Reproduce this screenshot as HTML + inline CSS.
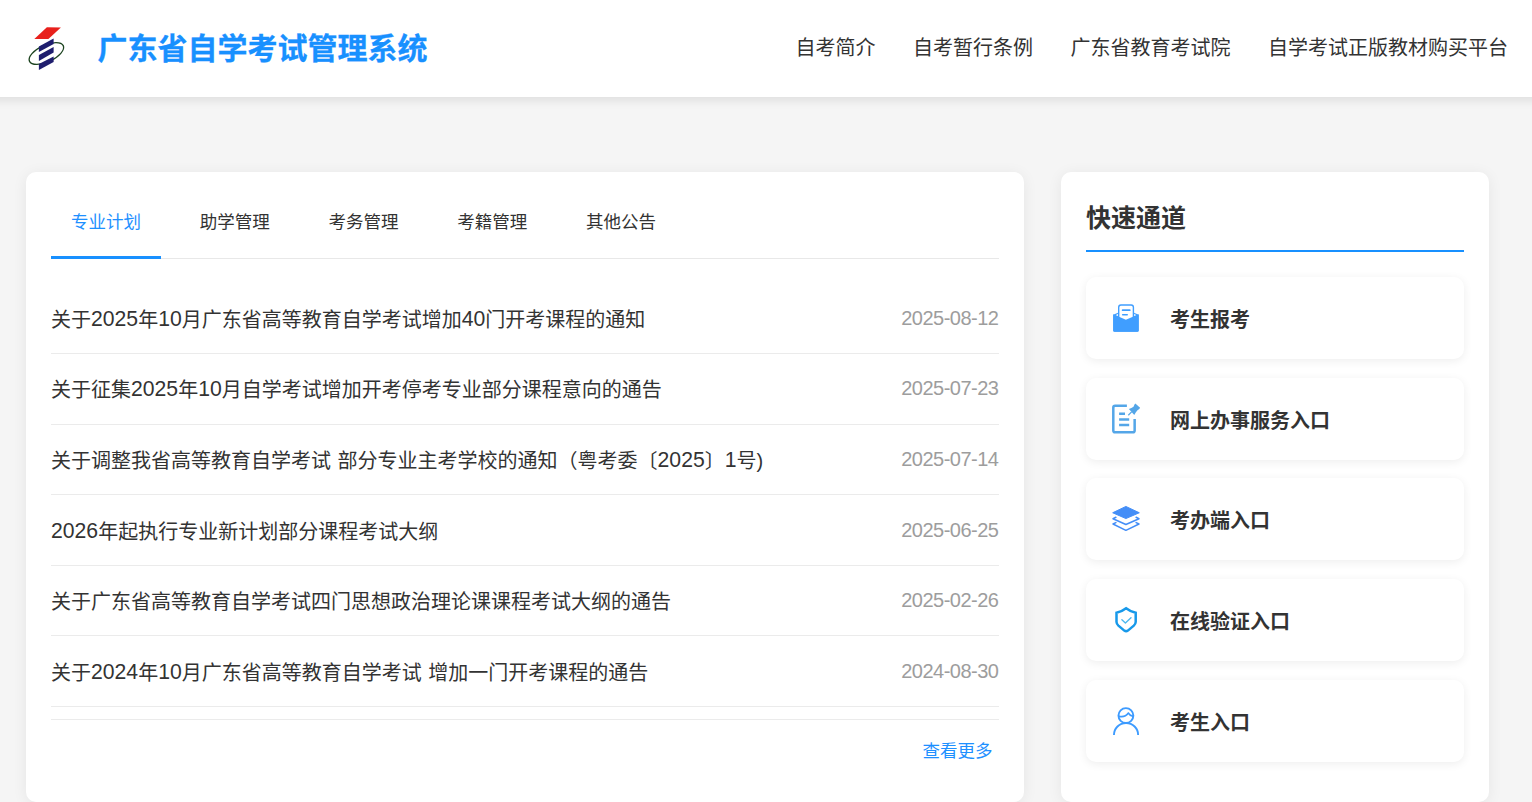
<!DOCTYPE html>
<html lang="zh-CN">
<head>
<meta charset="utf-8">
<title>广东省自学考试管理系统</title>
<style>
*{box-sizing:border-box;margin:0;padding:0}
html,body{width:1532px;height:802px;overflow:hidden}
body{background:#f5f5f5;font-family:"Liberation Sans","Noto Sans CJK SC",sans-serif;color:#333;position:relative}
a{text-decoration:none;color:inherit}
ul{list-style:none}

/* header */
.header{position:absolute;left:-30px;top:0;width:1592px;height:97px;background:#fff;box-shadow:0 2.5px 10px rgba(0,0,0,.1)}
.header-in{position:absolute;left:30px;top:0;width:1532px;height:97px}
.logo{position:absolute;left:26px;top:24px;width:42px;height:50px}
.site-title{position:absolute;left:97.5px;top:1.3px;-webkit-text-stroke:.3px #1890ff;height:97px;line-height:96px;font-size:30px;font-weight:700;color:#1890ff;white-space:nowrap}
.nav{position:absolute;right:24px;top:0;height:97px;display:flex;align-items:center}
.nav a{font-size:20px;color:#333;margin-left:37.5px;line-height:97px;white-space:nowrap}

/* left card */
.card{position:absolute;background:#fff;border-radius:10px;box-shadow:0 2px 15px rgba(0,0,0,.065)}
.news{left:26px;top:172px;width:998px;height:630px;padding:0 25px}
.tabs{position:relative;height:87px;border-bottom:1px solid #e8e8e8;display:flex;padding-top:25px}
.tab{width:110px;height:61px;margin-right:18.75px;text-align:center;font-size:17.5px;line-height:50.6px;color:#333;position:relative}
.tab.active{color:#1e90ff}
.tab.active:after{content:"";position:absolute;left:0;right:0;bottom:-.6px;height:2.6px;background:#1890ff}
.list{margin-top:24.5px}
.list li{height:70.6px;border-bottom:1px solid #ebebeb;display:flex;justify-content:space-between;align-items:center;white-space:nowrap}
.list li .t{font-size:20px;color:#333;word-spacing:1px}
.list li .d{font-size:20px;color:#9d9d9d;letter-spacing:-.5px;position:relative;top:0;left:-.5px}
.n{font-size:21.2px;line-height:0;position:relative;top:-1px}
.more{margin-top:12px;border-top:1px solid #ebebeb;text-align:right;padding:17px 6.5px 0 0;font-size:17.5px;color:#1e90ff}

/* right card */
.quick{left:1061px;top:172px;width:428px;height:630px;padding:25px}
.quick h3{font-size:25px;font-weight:700;color:#333;line-height:42.2px;height:55px;border-bottom:2.5px solid #1890ff;margin-top:0}
.q-item{position:absolute;left:25px;width:378px;height:82px;border-radius:10px;background:#fff;box-shadow:0 2px 10px rgba(0,0,0,.07);display:flex;align-items:center}
.q-item svg{position:absolute;left:0;top:0;width:80px;height:82px}
.q-item span{position:absolute;left:84px;top:0;line-height:87px;font-size:20px;font-weight:700;color:#333;white-space:nowrap}
</style>
</head>
<body>

<div class="header"><div class="header-in">
  <svg class="logo" viewBox="26 24 42 50">
    <polygon points="46.9,27.2 60.9,27.5 48.4,38.9 34.3,39.1" fill="#e8201c"/>
    <ellipse cx="46.4" cy="53.5" rx="18.6" ry="8.4" transform="rotate(-25 46.4 53.5)" fill="none" stroke="#1d4420" stroke-width="1.3"/>
    <polygon points="38.9,46.4 53.6,38.4 53.6,43.9 38.9,51.9" fill="#1f1e6e"/>
    <polygon points="38.9,54.9 53.6,47.1 53.6,52.4 38.9,60.9" fill="#1f1e6e"/>
    <polygon points="38.9,63.9 53.6,56.4 53.6,61.9 38.9,69.9" fill="#1f1e6e"/>
  </svg>
  <div class="site-title">广东省自学考试管理系统</div>
  <div class="nav">
    <a>自考简介</a>
    <a>自考暂行条例</a>
    <a>广东省教育考试院</a>
    <a>自学考试正版教材购买平台</a>
  </div>
</div></div>

<div class="card news">
  <div class="tabs">
    <div class="tab active">专业计划</div>
    <div class="tab">助学管理</div>
    <div class="tab">考务管理</div>
    <div class="tab">考籍管理</div>
    <div class="tab">其他公告</div>
  </div>
  <ul class="list">
    <li><span class="t">关于<span class="n">2025</span>年<span class="n">10</span>月广东省高等教育自学考试增加<span class="n">40</span>门开考课程的通知</span><span class="d">2025-08-12</span></li>
    <li><span class="t">关于征集<span class="n">2025</span>年<span class="n">10</span>月自学考试增加开考停考专业部分课程意向的通告</span><span class="d">2025-07-23</span></li>
    <li><span class="t">关于调整我省高等教育自学考试 部分专业主考学校的通知（粤考委〔<span class="n">2025</span>〕<span class="n">1</span>号)</span><span class="d">2025-07-14</span></li>
    <li><span class="t"><span class="n">2026</span>年起执行专业新计划部分课程考试大纲</span><span class="d">2025-06-25</span></li>
    <li><span class="t">关于广东省高等教育自学考试四门思想政治理论课课程考试大纲的通告</span><span class="d">2025-02-26</span></li>
    <li><span class="t">关于<span class="n">2024</span>年<span class="n">10</span>月广东省高等教育自学考试 增加一门开考课程的通告</span><span class="d">2024-08-30</span></li>
  </ul>
  <div class="more">查看更多</div>
</div>

<div class="card quick">
  <h3>快速通道</h3>

  <div class="q-item" style="top:104.75px">
    <svg viewBox="1086 276.75 80 82">
      <path d="M1113.2 314.4 L1118 312.6 H1134 L1138.7 314.4 V330 Q1138.7 331.5 1137.2 331.5 H1114.7 Q1113.2 331.5 1113.2 330 Z" fill="#409eff"/>
      <rect x="1118.7" y="304.7" width="14.7" height="18" rx="2.2" fill="#fff" stroke="#409eff" stroke-width="1.4"/>
      <polygon points="1117.9,313.6 1117.9,316.1 1115.6,315.1" fill="#fff"/>
      <polygon points="1134.2,313.6 1134.2,316.1 1136.5,315.1" fill="#fff"/>
      <path d="M1113.2 314.1 L1125.9 319.5 L1138.7 314.1 V330 Q1138.7 331.5 1137.2 331.5 H1114.7 Q1113.2 331.5 1113.2 330 Z" fill="#409eff"/>
      <path d="M1122.6 309.9 H1129.8" stroke="#409eff" stroke-width="1.7" stroke-linecap="round"/>
      <path d="M1122.6 314.5 H1127.3" stroke="#409eff" stroke-width="1.3" stroke-linecap="round"/>
    </svg>
    <span>考生报考</span>
  </div>
  <div class="q-item" style="top:205.5px">
    <svg viewBox="1086 377.5 80 82">
      <path d="M1126.9 405.35 H1115.1 Q1113.3 405.35 1113.3 407.1 V429.9 Q1113.3 431.75 1115.1 431.75 H1132.85 Q1134.65 431.75 1134.65 429.9 V418.4" fill="none" stroke="#54a6e8" stroke-width="2.5"/>
      <path d="M1119.1 413.35 H1125 M1119.1 418.95 H1129.2 M1119.1 424.55 H1129.2" stroke="#54a6e8" stroke-width="2.5"/>
      <polygon points="1135.35,403.1 1140.1,407.35 1139.3,408.4 1137.5,409.7 1135.9,411.85 1134.25,414.4 1128.9,408.5 1131.4,407.5 1133.5,406.2 1134.5,404.1" fill="#54a6e8"/>
      <path d="M1131.6 411.4 L1128.3 414.7" stroke="#54a6e8" stroke-width="1.3"/>
    </svg>
    <span>网上办事服务入口</span>
  </div>
  <div class="q-item" style="top:306.25px">
    <svg viewBox="1086 478.25 80 82">
      <polygon points="1125.9,506.7 1139.3,513 1125.9,518.8 1112.7,513" fill="#448ef7" stroke="#448ef7" stroke-width="1" stroke-linejoin="round"/>
      <polyline points="1115.9,517.5 1113,518.95 1125.9,524.8 1139,518.95 1136.1,517.5" fill="none" stroke="#448ef7" stroke-width="1.5" stroke-linejoin="round" stroke-linecap="round"/>
      <polyline points="1115.9,522.8 1113,524.25 1125.9,530.6 1139,524.25 1136.1,522.8" fill="none" stroke="#448ef7" stroke-width="1.5" stroke-linejoin="round" stroke-linecap="round"/>
    </svg>
    <span>考办端入口</span>
  </div>
  <div class="q-item" style="top:407px">
    <svg viewBox="1086 579 80 82">
      <path d="M1126.1 608.3 C1123.2 610.6 1120.2 612 1116.5 612.8 V622 Q1116.6 624 1118.4 625.6 L1124.3 630.6 Q1126.1 632 1127.9 630.6 L1133.8 625.6 Q1135.6 624 1135.7 622 V612.8 C1132 612 1129 610.6 1126.1 608.3 Z" fill="none" stroke="#1799ea" stroke-width="2.5" stroke-linejoin="miter"/>
      <polyline points="1121.9,619.8 1125.4,622.9 1131,617.7" fill="none" stroke="#4cb8f0" stroke-width="1.4" stroke-linecap="round" stroke-linejoin="round"/>
    </svg>
    <span>在线验证入口</span>
  </div>
  <div class="q-item" style="top:507.75px">
    <svg viewBox="1086 679.75 80 82">
      <circle cx="1125.9" cy="715.35" r="7.45" fill="none" stroke="#3d9bff" stroke-width="1.9"/>
      <path d="M1113.95 734.8 A12.1 12.1 0 0 1 1138.15 734.8" fill="none" stroke="#3d9bff" stroke-width="1.9"/>
      <path d="M1118.5 715.9 Q1124.6 717.9 1128.4 712.8 Q1129.8 715.4 1133.3 716.1" fill="none" stroke="#3d9bff" stroke-width="1.7" stroke-linejoin="round"/>
    </svg>
    <span>考生入口</span>
  </div>
</div>

</body>
</html>
